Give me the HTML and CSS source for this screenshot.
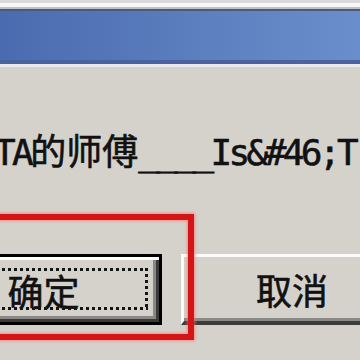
FILE: index.html
```html
<!DOCTYPE html>
<html lang="zh">
<head>
<meta charset="utf-8">
<link rel="stylesheet" href="styles.css">
</head>
<body>
<div class="dialog">
  <div class="frame-top"></div>
  <div class="titlebar"></div>
  <div class="title-sep"></div>
  <p class="msg"><span class="lat">TA</span><span class="cjk">的师傅</span><span class="lat">____Is&amp;#46;T</span></p>
  <div class="buttons">
    <div class="btn btn-ok"><span class="label">确定</span></div>
    <div class="btn btn-cancel"><span class="label">取消</span></div>
  </div>
  <div class="mark"></div>
</div>
</body>
</html>
```
FILE: styles.css
```css
html, body {
  margin: 0;
  padding: 0;
  width: 360px;
  height: 360px;
  overflow: hidden;
  background: #d5d2cc;
}

.dialog {
  position: relative;
  width: 360px;
  height: 360px;
  overflow: hidden;
  font-family: "Noto Sans CJK SC", sans-serif;
  color: #111;
}

.frame-top {
  height: 11px;
  background: linear-gradient(#d9d9d9 0 3px, #f7f7f7 3px 7px, #bfc0c6 7px 9px, #4b5a7e 9px 11px);
}

.titlebar {
  height: 49px;
  background: linear-gradient(90deg, #4b6bb0 0%, #5a7dbd 50%, #6a8ecb 100%);
  border-bottom: 4px solid #4863a0;
}

.title-sep {
  height: 3px;
  background: #e9e8ec;
}

.msg {
  margin: 62px 0 0 -6px;
  height: 40px;
  line-height: 40px;
  font-size: 36px;
  white-space: nowrap;
  -webkit-text-stroke: 0.6px #111;
}

.lat {
  font-family: "DejaVu Sans Mono", monospace;
  letter-spacing: -3.6px;
}

.cjk {
  font-family: "Noto Sans CJK SC", sans-serif;
  letter-spacing: 0;
}

.buttons {
  display: flex;
  gap: 19px;
  margin: 85px 0 0 -75px;
}

.btn {
  position: relative;
  box-sizing: border-box;
  height: 71px;
  flex: none;
  display: flex;
  align-items: center;
  justify-content: center;
  font-size: 36px;
  background: #d5d2cc;
}

.label {
  line-height: 36px;
  -webkit-text-stroke: 0.6px #111;
}

.btn-ok {
  width: 237px;
  border: 3px solid #000;
  box-shadow: inset 3px 3px 0 #fdfdfd, inset -3px -3px 0 #3a3a3a, inset -6px -6px 0 #8a8886;
}

.btn-ok::after {
  content: "";
  position: absolute;
  left: 14px;
  right: 11px;
  top: 11px;
  bottom: 12px;
  background:
    repeating-linear-gradient(90deg, #151515 0 3px, transparent 3px 6px) top / 100% 3px no-repeat,
    repeating-linear-gradient(90deg, #151515 0 3px, transparent 3px 6px) bottom / 100% 3px no-repeat,
    repeating-linear-gradient(180deg, #151515 0 3px, transparent 3px 6px) left / 3px 100% no-repeat,
    repeating-linear-gradient(180deg, #151515 0 3px, transparent 3px 6px) right / 3px 100% no-repeat;
}

.btn-cancel {
  width: 223px;
  border-top: 3px solid #fbfbfb;
  border-left: 3px solid #fbfbfb;
  border-bottom: 4px solid #3c3c3c;
  border-right: 4px solid #3c3c3c;
  box-shadow: inset -3px -3px 0 #8c8a87;
}

.mark {
  position: absolute;
  left: -20px;
  top: 214px;
  width: 202px;
  height: 114px;
  border: 6px solid #d31515;
  box-shadow: 0 0 3px 1px rgba(255, 110, 110, 0.7), inset 0 0 3px 1px rgba(255, 110, 110, 0.7);
}
```
